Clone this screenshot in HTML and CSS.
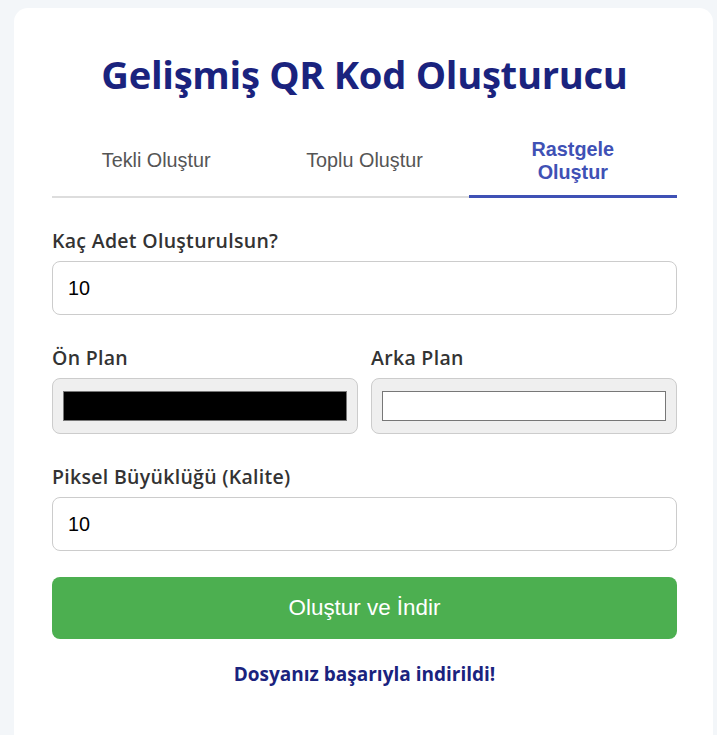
FILE: index.html
```html
<!DOCTYPE html>
<html lang="tr">
<head>
<meta charset="utf-8">
<title>Gelişmiş QR Kod Oluşturucu</title>
<link rel="stylesheet" href="styles.css">
</head>
<body>
<main class="card">
  <h1 class="title">Gelişmiş QR Kod Oluşturucu</h1>
  <nav class="tabs">
    <button class="tab" type="button">Tekli Oluştur</button>
    <button class="tab" type="button">Toplu Oluştur</button>
    <button class="tab active" type="button">Rastgele Oluştur</button>
  </nav>
  <div class="group">
    <label class="label" for="count">Kaç Adet Oluşturulsun?</label>
    <input class="field" id="count" type="number" value="10">
  </div>
  <div class="group colors">
    <div class="col">
      <label class="label" for="fg">Ön Plan</label>
      <input class="color" id="fg" type="color" value="#000000">
    </div>
    <div class="col">
      <label class="label" for="bg">Arka Plan</label>
      <input class="color" id="bg" type="color" value="#ffffff">
    </div>
  </div>
  <div class="group">
    <label class="label" for="size">Piksel Büyüklüğü (Kalite)</label>
    <input class="field" id="size" type="number" value="10">
  </div>
  <button class="submit" type="button">Oluştur ve İndir</button>
  <p class="status">Dosyanız başarıyla indirildi!</p>
</main>
</body>
</html>
```

FILE: styles.css
```css
html, body {
  margin: 0;
  padding: 0;
}
body {
  background: #f3f6f9;
  font-family: "Open Sans", "Noto Sans", sans-serif;
  padding: 8px 4px 0 14px;
  min-height: 735px;
  box-sizing: border-box;
}
.card {
  background: #ffffff;
  border-radius: 14px;
  padding: 40px 36px 40px 38px;
  min-height: 760px;
  box-sizing: border-box;
}
.title {
  margin: 0 0 30px;
  text-align: center;
  color: #1a237e;
  font-size: 38.2px;
  font-weight: 700;
  line-height: 52px;
  letter-spacing: -0.3px;
}
.tabs {
  display: grid;
  grid-template-columns: 1fr 1fr 1fr;
  border-bottom: 2px solid #dddddd;
  margin-bottom: 30px;
}
.tab {
  background: none;
  border: none;
  border-bottom: 3px solid transparent;
  margin-bottom: -2px;
  padding: 8px 30px 12px;
  font-family: "Liberation Sans", Arial, sans-serif;
  font-size: 19.8px;
  line-height: 22.5px;
  color: #555555;
  cursor: pointer;
}
.tab.active {
  color: #3f51b5;
  font-weight: 700;
  border-bottom-color: #3f51b5;
}
.group {
  margin-bottom: 30px;
}
.label {
  display: block;
  font-size: 19.5px;
  font-weight: 600;
  color: #333333;
  line-height: 26px;
  letter-spacing: 0.3px;
  margin-bottom: 7px;
}
.field {
  display: block;
  width: 100%;
  box-sizing: border-box;
  height: 54px;
  padding: 0 15px;
  border: 1px solid #cccccc;
  border-radius: 8px;
  font-family: "Liberation Sans", Arial, sans-serif;
  font-size: 19.8px;
  color: #000000;
  background: #ffffff;
}
.colors {
  display: grid;
  grid-template-columns: 1fr 1fr;
  gap: 13px;
}
.color {
  display: block;
  width: 100%;
  box-sizing: border-box;
  height: 56px;
  padding: 8px;
  border: 1px solid #cccccc;
  border-radius: 8px;
  background: #efefef;
  cursor: pointer;
}
.submit {
  display: block;
  width: 100%;
  height: 62px;
  margin-top: -4px;
  border: none;
  border-radius: 8px;
  background: #4caf50;
  color: #ffffff;
  font-family: "Liberation Sans", Arial, sans-serif;
  font-size: 22.4px;
  cursor: pointer;
}
.status {
  margin: 22px 0 0;
  text-align: center;
  color: #1a237e;
  font-size: 19px;
  font-weight: 700;
  line-height: 26px;
}
```
